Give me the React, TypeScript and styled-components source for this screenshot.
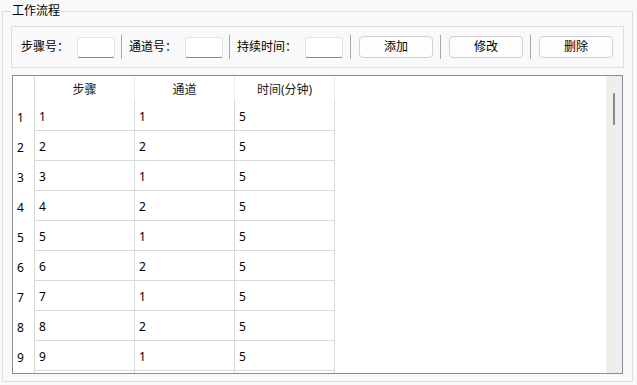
import React from 'react';
import styled, { createGlobalStyle } from 'styled-components';

const GlobalStyle = createGlobalStyle`
  html, body {
    margin: 0;
    padding: 0;
    background-color: #f9f9f9;
  }
  body {
    font-family: "Noto Sans", "Noto Sans CJK SC", sans-serif;
    font-size: 12px;
    color: #000000;
  }
`;

const Root = styled.div`
  width: 637px;
  height: 385px;
  overflow: hidden;
`;

const Group = styled.fieldset`
  box-sizing: border-box;
  width: 631px;
  margin: 3px 0 0 2px;
  padding: 7px 8px 7px 8px;
  border: 1px solid #dcdcdc;
  min-inline-size: 0;
`;

const Legend = styled.legend`
  padding: 0 1px;
  font-size: 12px;
  line-height: 16px;
  color: #000000;
`;

const Toolbar = styled.div`
  box-sizing: border-box;
  height: 42px;
  border: 1px solid #dcdcdc;
  display: flex;
  align-items: center;
  padding-left: 9px;
`;

const Label = styled.span`
  font-size: 12px;
  line-height: 16px;
  margin-right: 8px;
  white-space: nowrap;
`;

const Input = styled.input`
  box-sizing: border-box;
  width: 38px;
  height: 21px;
  margin: 0;
  padding: 0 4px;
  background: #ffffff;
  border: 1px solid #e5e5e5;
  border-bottom-color: #8a8a8a;
  border-radius: 3px;
  outline: none;
`;

const Separator = styled.div<{ $wide?: boolean }>`
  width: 1px;
  height: 24px;
  background-color: #a8a8a8;
  margin: ${(p) => (p.$wide ? '0 8px 0 7px' : '0 7px 0 6px')};
`;

const Button = styled.button`
  box-sizing: border-box;
  width: 74px;
  height: 22px;
  margin: 0;
  padding: 0;
  background: #fdfdfd;
  border: 1px solid #d0d0d0;
  border-radius: 4px;
  font-family: inherit;
  font-size: 12px;
  color: #000000;
  line-height: 18px;
`;

const TableBox = styled.div`
  box-sizing: border-box;
  margin: 7px 1px 0 1px;
  height: 299px;
  border: 1px solid #8b8b9b;
  background: #ffffff;
  display: flex;
`;

const GridArea = styled.div`
  flex: 1;
  overflow: hidden;
`;

const Grid = styled.div`
  display: grid;
  grid-template-columns: 22px 100px 100px 100px;
  grid-template-rows: 25px;
  grid-auto-rows: 30px;
`;

const HeadCell = styled.div<{ $corner?: boolean }>`
  box-sizing: border-box;
  border-right: 1px solid ${(p) => (p.$corner ? '#d9d9d9' : '#ececec')};
  display: flex;
  align-items: center;
  justify-content: center;
  padding-top: 2px;
  line-height: 16px;
  color: #1a1a1a;
`;

const RowHead = styled.div`
  box-sizing: border-box;
  border-right: 1px solid #d9d9d9;
  display: flex;
  align-items: center;
  padding: 3px 0 0 4px;
  line-height: 16px;
`;

const Cell = styled.div`
  box-sizing: border-box;
  border-right: 1px solid #d9d9d9;
  border-bottom: 1px solid #d9d9d9;
  display: flex;
  align-items: center;
  padding: 3px 0 0 4px;
  line-height: 16px;
`;

const Scrollbar = styled.div`
  width: 16px;
  background: #eeeeee;
  padding-top: 17px;
`;

const Thumb = styled.div`
  width: 2px;
  height: 32px;
  margin-left: 7px;
  border-radius: 1px;
  background: #8a8a8a;
`;

const steps = [
  { step: 1, channel: 1, time: 5 },
  { step: 2, channel: 2, time: 5 },
  { step: 3, channel: 1, time: 5 },
  { step: 4, channel: 2, time: 5 },
  { step: 5, channel: 1, time: 5 },
  { step: 6, channel: 2, time: 5 },
  { step: 7, channel: 1, time: 5 },
  { step: 8, channel: 2, time: 5 },
  { step: 9, channel: 1, time: 5 },
];

const App = () => {
  return (
    <Root>
      <GlobalStyle />
      <Group>
        <Legend>工作流程</Legend>
        <Toolbar>
          <Label>步骤号：</Label>
          <Input />
          <Separator />
          <Label>通道号：</Label>
          <Input />
          <Separator />
          <Label>持续时间：</Label>
          <Input />
          <Separator $wide />
          <Button>添加</Button>
          <Separator $wide />
          <Button>修改</Button>
          <Separator $wide />
          <Button>删除</Button>
        </Toolbar>
        <TableBox>
          <GridArea>
            <Grid>
              <HeadCell $corner />
              <HeadCell>步骤</HeadCell>
              <HeadCell>通道</HeadCell>
              <HeadCell>时间(分钟)</HeadCell>
              {steps.map((row, i) => (
                <React.Fragment key={row.step}>
                  <RowHead>{i + 1}</RowHead>
                  <Cell>{row.step}</Cell>
                  <Cell>{row.channel}</Cell>
                  <Cell>{row.time}</Cell>
                </React.Fragment>
              ))}
              {/* next row, scrolled mostly out of view */}
              <RowHead />
              <Cell />
              <Cell />
              <Cell />
            </Grid>
          </GridArea>
          <Scrollbar>
            <Thumb />
          </Scrollbar>
        </TableBox>
      </Group>
    </Root>
  );
};

export default App;
